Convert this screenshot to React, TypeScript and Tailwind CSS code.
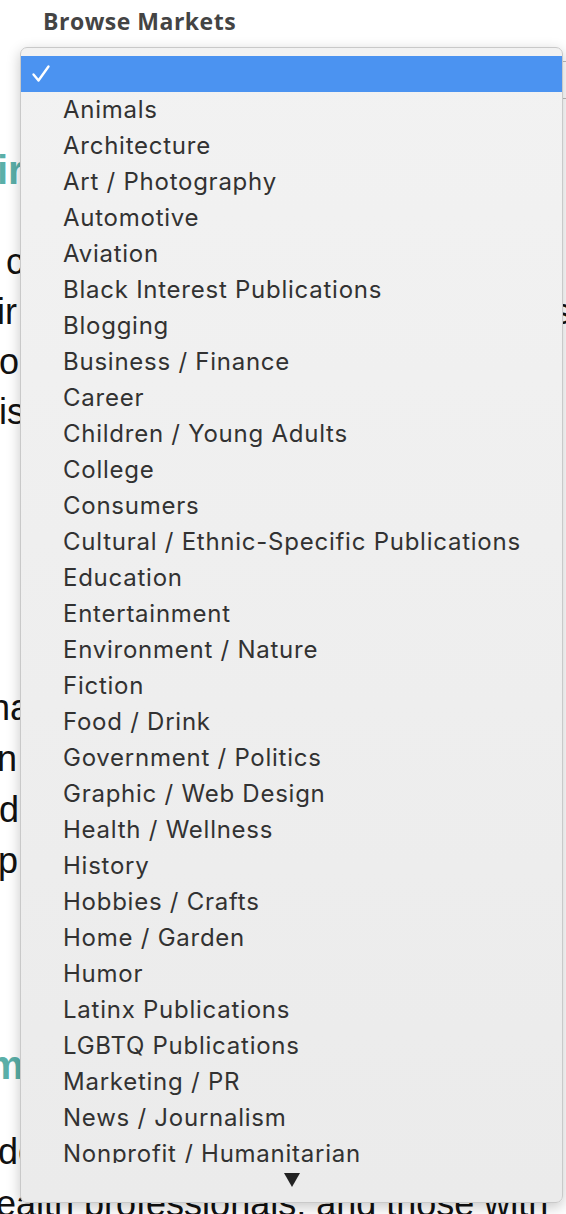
import React from "react";

const items = [
  "Animals",
  "Architecture",
  "Art / Photography",
  "Automotive",
  "Aviation",
  "Black Interest Publications",
  "Blogging",
  "Business / Finance",
  "Career",
  "Children / Young Adults",
  "College",
  "Consumers",
  "Cultural / Ethnic-Specific Publications",
  "Education",
  "Entertainment",
  "Environment / Nature",
  "Fiction",
  "Food / Drink",
  "Government / Politics",
  "Graphic / Web Design",
  "Health / Wellness",
  "History",
  "Hobbies / Crafts",
  "Home / Garden",
  "Humor",
  "Latinx Publications",
  "LGBTQ Publications",
  "Marketing / PR",
  "News / Journalism",
  "Nonprofit / Humanitarian",
  "Parenting",
  "Pets",
];

export default function App() {
  return (
    <div className="relative w-[566px] h-[1214px] overflow-hidden bg-white">
      {/* Background page */}
      <div className="flex flex-col">
        <div className="pl-[43px] pt-[5px] text-[23px] tracking-[0.5px] font-bold text-[#444] [font-family:'Open_Sans',sans-serif] leading-[32px]">
          Browse Markets
        </div>
        <div className="mt-[24px] ml-[20px] mr-[-20px] h-[38px] border border-[#bbb] rounded-[4px]" />
        <div className="mt-[46px] -ml-[3px] text-[40px] leading-[50px] font-bold text-[#5aafa8] [font-family:'Liberation_Sans',Arial,sans-serif] whitespace-nowrap">
          ir Stories to Share
        </div>
        <div className="mt-[42px] text-[36px] leading-[50px] text-[#111] [font-family:'Liberation_Sans',Arial,sans-serif] whitespace-nowrap">
          <div className="-ml-[4px]">&nbsp;c writers who want to share their T</div>
          <div className="-ml-[3px]">ir personal experiences and lessons</div>
          <div className="-ml-[1px]">o ve learned along the way of life s</div>
          <div className="-ml-[1px]">is for those who have a story to tell</div>
        </div>
        <div className="mt-[245px] text-[36px] leading-[51px] text-[#111] [font-family:'Liberation_Sans',Arial,sans-serif] whitespace-nowrap">
          <div className="-ml-[10px]">na will consider a wide range of topi m</div>
          <div className="-ml-[3px]">n mental and physical health, recov y</div>
          <div className="-ml-[1px]">d personal growth and the jou s</div>
          <div className="-ml-[2px]">p and self-discovery for readers e</div>
        </div>
        <div className="mt-[154px] -ml-[12px] text-[40px] leading-[50px] font-bold text-[#5aafa8] [font-family:'Liberation_Sans',Arial,sans-serif] whitespace-nowrap">
          mission Guidelines
        </div>
        <div className="mt-[36px] text-[36px] leading-[52px] text-[#111] [font-family:'Liberation_Sans',Arial,sans-serif] whitespace-nowrap">
          <div className="-ml-[2px]">de is open to writers, caregivers, e</div>
          <div className="-ml-[4px]">ealth professionals, and those with</div>
        </div>
      </div>

      {/* Open select menu */}
      <div className="absolute left-[20px] top-[47px] w-[543px] h-[1156px] rounded-[7px] border border-[#c9c9c9] bg-gradient-to-b from-[#f2f2f2] to-[#ebebeb] shadow-[0_4px_14px_rgba(0,0,0,0.22)] flex flex-col overflow-hidden [font-family:Inter,'Noto_Sans',sans-serif]">
        <div className="pt-[8px] h-[1115px] overflow-hidden flex flex-col">
          <div className="h-[36px] shrink-0 bg-[#4b93f1] flex items-center pl-[10px]">
            <svg width="20" height="20" viewBox="0 0 20 20" fill="none">
              <path d="M2.5 10.5 L7.5 16.5 L17.5 2.5" stroke="white" strokeWidth="2.4" strokeLinecap="round" strokeLinejoin="round" />
            </svg>
          </div>
          {items.map((it) => (
            <div
              key={it}
              className="h-[36px] shrink-0 flex items-center pl-[42px] text-[24px] tracking-[0.75px] text-[#323232] whitespace-nowrap"
            >
              {it}
            </div>
          ))}
        </div>
        <div className="flex-1 flex items-center justify-center pb-[6px]">
          <svg width="16" height="14" viewBox="0 0 16 14">
            <path d="M0 0 L16 0 L8 14 Z" fill="#222" />
          </svg>
        </div>
      </div>
    </div>
  );
}
